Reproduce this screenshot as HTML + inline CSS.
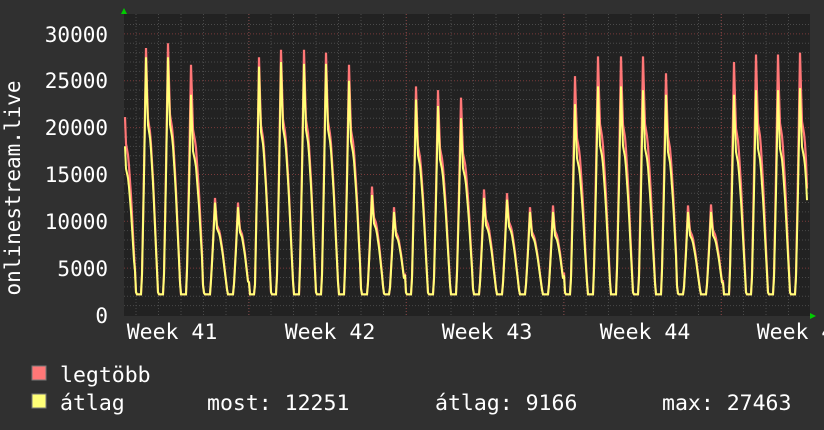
<!DOCTYPE html>
<html><head><meta charset="utf-8"><style>
html,body{margin:0;padding:0;background:#303030;width:824px;height:430px;overflow:hidden}
svg{display:block}
text{font-family:"DejaVu Sans Mono","Liberation Mono",monospace;fill:#fff}
</style></head><body>
<svg id="g" width="824" height="430" xmlns="http://www.w3.org/2000/svg">
<rect width="824" height="430" fill="#303030"/>
<rect x="124" y="14" width="686" height="302" fill="#222"/>
<g id="grid"></g>
<g font-size="21" text-anchor="end">
<text x="108" y="323">0</text>
<text x="108" y="276">5000</text>
<text x="108" y="229">10000</text>
<text x="108" y="182">15000</text>
<text x="108" y="135">20000</text>
<text x="108" y="88">25000</text>
<text x="108" y="42">30000</text>
</g>
<text font-size="21" transform="translate(20,188) rotate(-90)" text-anchor="middle">onlinestream.live</text>
<g font-size="21.5" text-anchor="middle">
<text x="172" y="339">Week 41</text>
<text x="330" y="339">Week 42</text>
<text x="487" y="339">Week 43</text>
<text x="645" y="339">Week 44</text>
<text x="802" y="339">Week 45</text>
</g>
<path id="red" fill="none" stroke="#ff7777" stroke-width="2.2"/>
<path id="yel" fill="none" stroke="#ffff77" stroke-width="2"/>
<polygon points="121,14 127,14 124,8" fill="#00cc00"/>
<polygon points="810,313 810,319 816,316" fill="#00cc00"/>
<rect x="32" y="366" width="14" height="14" fill="#ff7777" stroke="#777" stroke-width="1"/>
<rect x="32" y="394" width="14" height="14" fill="#ffff77" stroke="#777" stroke-width="1"/>
<g font-size="21.5">
<text x="60" y="382">legtöbb</text>
<text x="60" y="410">átlag</text>
<text x="207" y="410">most: 12251</text>
<text x="435" y="410">átlag: 9166</text>
<text x="662" y="410">max: 27463</text>
</g>
</svg>
<script>
var g=document.getElementById("grid");
function Y(v){return 315-v*0.00937;}
var s="";
for(var v=1000;v<=31000;v+=1000){var y=Y(v);var maj=v%5000==0;
s+='<line x1="124" x2="810" y1="'+y+'" y2="'+y+'" stroke="'+(maj?'#7a3a3a':'#4a4a4a')+'" stroke-dasharray="1,2"/>';}
for(var x=136;x<810;x+=22.5){s+='<line y1="14" y2="316" x1="'+x+'" x2="'+x+'" stroke="#4a4a4a" stroke-dasharray="1,2"/>';}
[249,406.5,564,721.5].forEach(function(x){s+='<line y1="14" y2="316" x1="'+x+'" x2="'+x+'" stroke="#7a3a3a" stroke-dasharray="1,2"/>';});
g.innerHTML=s;
var peaks=[[124,24700,21000],[146,28500,27500],[168,29000,27500],[191,26700,23500],[215,12500,12000],[238,12000,11500],[259,27500,26500],[281,28300,27000],[304,28300,26800],[326,28000,26800],[349,26700,25000],[372,13700,12800],[394,11500,11000],[416,24400,23000],[438,24000,22300],[461,23200,21000],[484,13400,12500],[507,13000,12300],[530,11500,11000],[553,11700,11000],[575,25500,22500],[598,27600,24400],[621,27600,24400],[643,27600,24000],[666,25800,23500],[688,11700,11000],[711,11800,11000],[734,27000,23500],[756,27800,24000],[778,27800,24000],[800,28000,24200],[823,27000,24000]];
var shape=[[0,1],[0.08,0.72],[0.2,0.65],[0.33,0.45],[0.45,0.2],[0.55,0],[0.8,0],[0.9,0.45],[1,1]];
function val(x,idx){
 for(var i=0;i<peaks.length-1;i++){var a=peaks[i],b=peaks[i+1];
  if(x>=a[0]&&x<=b[0]){var u=(x-a[0])/(b[0]-a[0]);
   for(var k=0;k<shape.length-1;k++){if(u>=shape[k][0]&&u<=shape[k+1][0]){
    var t=(u-shape[k][0])/(shape[k+1][0]-shape[k][0]);
    var P=u<0.5?a[idx]:b[idx];var f=shape[k][1]+(shape[k+1][1]-shape[k][1])*t;
    var base=2200;return base+(P-base)*f;}}}}
 return 2200;}
function path(idx){var d="";for(var x=125;x<=807;x++){var v=val(x,idx);if(x==807)v=idx==1?13500:12251;d+=(x==125?"M":"L")+x+","+Y(v).toFixed(1);}return d;}
document.getElementById("red").setAttribute("d",path(1));
document.getElementById("yel").setAttribute("d",path(2));
</script>
</body></html>
